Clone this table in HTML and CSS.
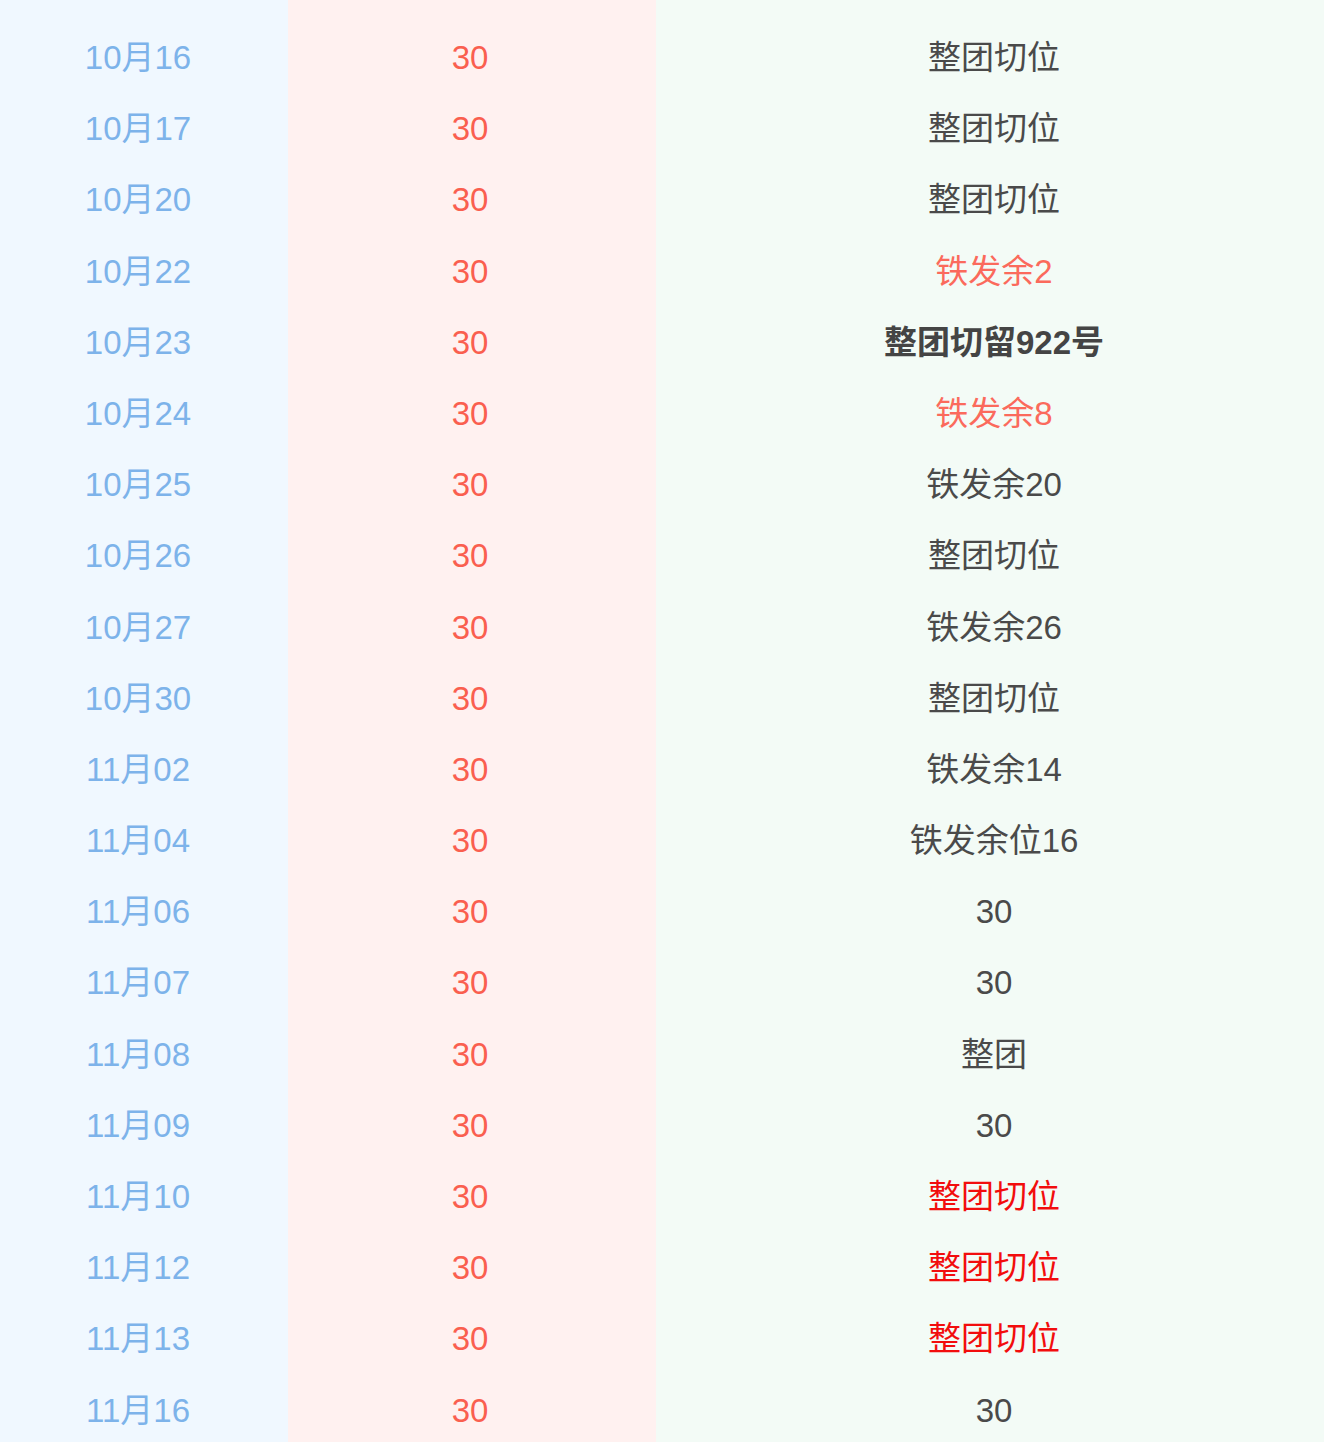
FILE: index.html
```html
<!DOCTYPE html>
<html lang="zh-CN">
<head>
<meta charset="utf-8">
<title>团期</title>
<link rel="stylesheet" href="styles.css">
</head>
<body>
<div class="table">
  <div class="row"><div class="date">10月16</div><div class="num">30</div><div class="note">整团切位</div></div>
  <div class="row"><div class="date">10月17</div><div class="num">30</div><div class="note">整团切位</div></div>
  <div class="row"><div class="date">10月20</div><div class="num">30</div><div class="note">整团切位</div></div>
  <div class="row"><div class="date">10月22</div><div class="num">30</div><div class="note warn">铁发余2</div></div>
  <div class="row"><div class="date">10月23</div><div class="num">30</div><div class="note bold">整团切留922号</div></div>
  <div class="row"><div class="date">10月24</div><div class="num">30</div><div class="note warn">铁发余8</div></div>
  <div class="row"><div class="date">10月25</div><div class="num">30</div><div class="note">铁发余20</div></div>
  <div class="row"><div class="date">10月26</div><div class="num">30</div><div class="note">整团切位</div></div>
  <div class="row"><div class="date">10月27</div><div class="num">30</div><div class="note">铁发余26</div></div>
  <div class="row"><div class="date">10月30</div><div class="num">30</div><div class="note">整团切位</div></div>
  <div class="row"><div class="date">11月02</div><div class="num">30</div><div class="note">铁发余14</div></div>
  <div class="row"><div class="date">11月04</div><div class="num">30</div><div class="note">铁发余位16</div></div>
  <div class="row"><div class="date">11月06</div><div class="num">30</div><div class="note">30</div></div>
  <div class="row"><div class="date">11月07</div><div class="num">30</div><div class="note">30</div></div>
  <div class="row"><div class="date">11月08</div><div class="num">30</div><div class="note">整团</div></div>
  <div class="row"><div class="date">11月09</div><div class="num">30</div><div class="note">30</div></div>
  <div class="row"><div class="date">11月10</div><div class="num">30</div><div class="note red">整团切位</div></div>
  <div class="row"><div class="date">11月12</div><div class="num">30</div><div class="note red">整团切位</div></div>
  <div class="row"><div class="date">11月13</div><div class="num">30</div><div class="note red">整团切位</div></div>
  <div class="row"><div class="date">11月16</div><div class="num">30</div><div class="note">30</div></div>
</div>
</body>
</html>
```

FILE: styles.css
```css
html, body {
  margin: 0;
  padding: 0;
}
body {
  font-family: "Liberation Sans", "Noto Sans CJK SC", sans-serif;
  font-size: 33px;
  background: linear-gradient(to right, #f0f8ff 0, #f0f8ff 288px, #fff1f0 288px, #fff1f0 656px, #f3fbf6 656px);
  min-height: 1442px;
}
.table {
  padding-top: 22px;
}
.row {
  display: grid;
  grid-template-columns: 276px 388px 660px;
  height: 71.2px;
  line-height: 71.2px;
  text-align: center;
  white-space: nowrap;
}
.date {
  color: #7db3ea;
}
.num {
  color: #fa5f4f;
}
.note {
  color: #4a4a4a;
}
.note.warn {
  color: #fb6a5c;
}
.note.bold {
  font-weight: bold;
  color: #444444;
}
.note.red {
  color: #f20d0d;
}
```
